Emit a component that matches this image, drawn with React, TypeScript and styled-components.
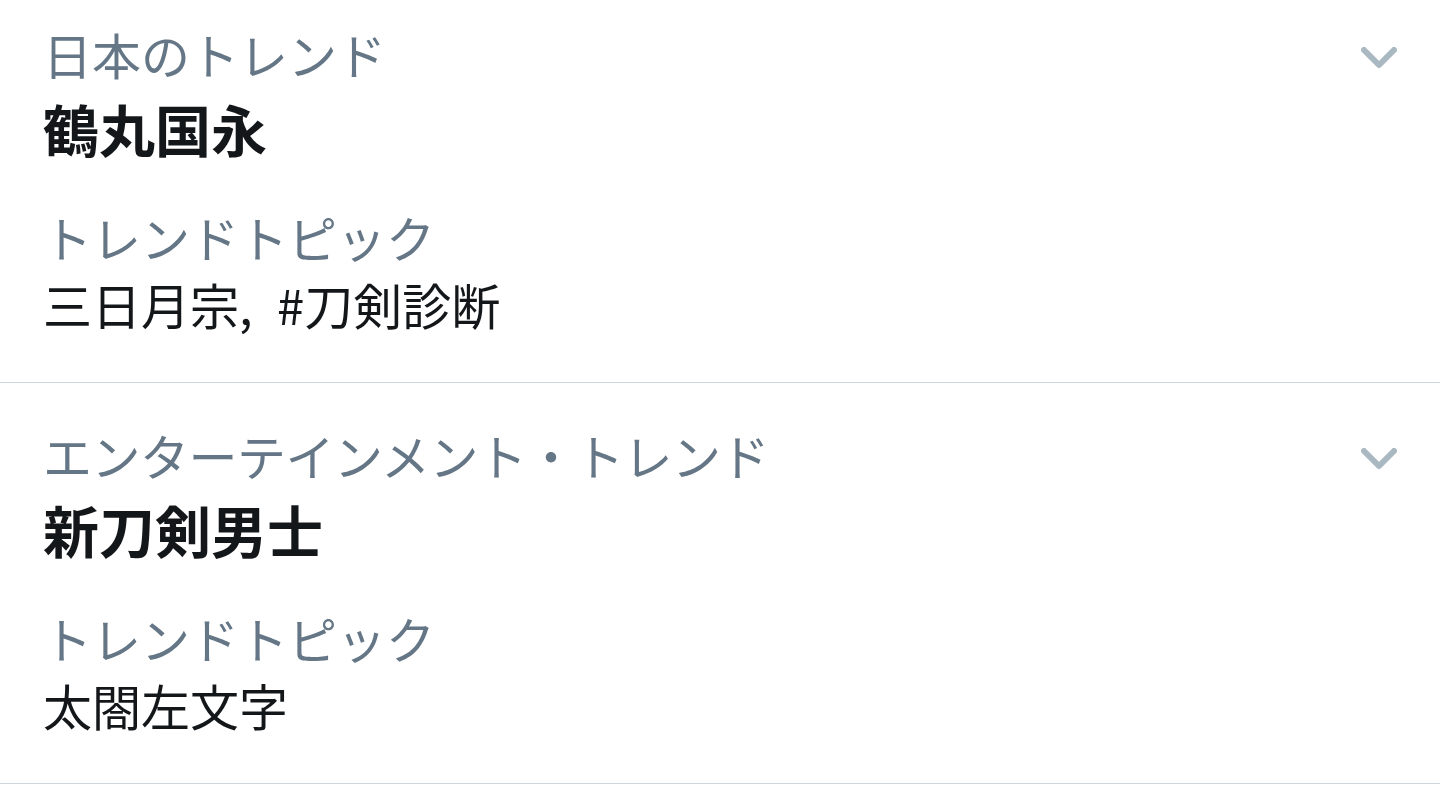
import * as React from 'react';
import styled, { createGlobalStyle } from 'styled-components';

const GlobalStyle = createGlobalStyle`
	html, body {
		margin: 0;
		padding: 0;
		background: #ffffff;
	}
	body {
		font-family: "Noto Sans CJK JP", "Noto Sans", sans-serif;
		overflow: hidden;
	}
`;

interface ITrend {
	context: string,
	name: string,
	topics: string,
}

const trends: ITrend[] = [
	{ context: '日本のトレンド', name: '鶴丸国永', topics: '三日月宗,\u2002#刀剣診断' },
	{ context: 'エンターテインメント・トレンド', name: '新刀剣男士', topics: '太閤左文字' },
];

const List = styled.div`
	margin-top: -18px;
	width: 1440px;
`;

const Item = styled.div`
	padding: 40px 43px 43px 43px;
	border-bottom: 1px solid #ccd6dd;
`;

const Header = styled.div`
	display: flex;
	align-items: center;
	justify-content: space-between;
`;

const Label = styled.div<{ $tight?: boolean }>`
	font-size: 49px;
	line-height: 64px;
	color: #657786;
	white-space: nowrap;
	letter-spacing: ${p => (p.$tight ? '-0.5px' : '0')};
`;

const TopicLabel = styled(Label)`
	margin-top: 35px;
`;

const Title = styled.div`
	font-size: 56px;
	line-height: 84px;
	font-weight: 700;
	color: #14171a;
`;

const Topics = styled.div`
	font-size: 49px;
	line-height: 70px;
	color: #14171a;
	white-space: pre;
`;

const Caret = styled.svg`
	width: 36px;
	height: 22px;
	margin-top: 7px;
	flex-shrink: 0;
`;

const Chevron = () => (
	<Caret viewBox="0 0 36 22" aria-hidden="true">
		<path
			d="M3 3 L18 18 L33 3"
			fill="none"
			stroke="#aab8c2"
			strokeWidth={6}
			strokeLinecap="round"
			strokeLinejoin="round"
		/>
	</Caret>
);

const TrendItem = ({ trend }: { trend: ITrend }) => (
	<Item>
		<Header>
			<Label $tight={trend.context.length > 10}>{trend.context}</Label>
			<Chevron />
		</Header>
		<Title>{trend.name}</Title>
		<TopicLabel>トレンドトピック</TopicLabel>
		<Topics>{trend.topics}</Topics>
	</Item>
);

const App: React.FC = () => (
	<>
		<GlobalStyle />
		<List>
			{trends.map((t) => <TrendItem key={t.name} trend={t} />)}
		</List>
	</>
);

export default App;
